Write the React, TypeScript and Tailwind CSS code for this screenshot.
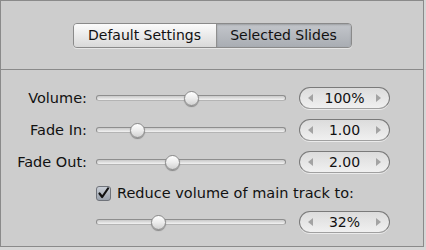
import React from "react";

const font = { fontFamily: '"DejaVu Sans", "Liberation Sans", sans-serif' };

interface SliderRowProps {
  label?: string;
  value: string;
  pos: number;
  className?: string;
}

function Slider({ pos }: { pos: number }) {
  return (
    <div className="relative w-[190px] h-[22px] flex items-center">
      <div className="w-full h-[6px] rounded-full border border-[#8e8e8e] border-b-[#b4b4b4] bg-gradient-to-b from-[#c9c9c9] to-[#f2f2f2]" />
      <div
        className="absolute top-[4px] w-[15px] h-[15px] -ml-[7px] rounded-full border border-[#8a8a8a] bg-gradient-to-b from-[#ffffff] via-[#ececec] to-[#d2d2d2] shadow-[0_1px_1px_rgba(0,0,0,0.35)]"
        style={{ left: `${pos * 100}%` }}
      />
    </div>
  );
}

function Stepper({ value }: { value: string }) {
  return (
    <div className="w-[91px] h-[22px] rounded-full border border-[#7a7a7a] border-b-[#a0a0a0] bg-gradient-to-b from-[#dcdcdc] to-[#f0f0f0] flex items-center justify-between px-[8px] shadow-[0_1px_0_rgba(255,255,255,0.6)]">
      <span className="w-0 h-0 border-y-[4px] border-y-transparent border-r-[5px] border-r-[#a3a3a3]" />
      <span className="text-[14px] text-[#111] leading-none">{value}</span>
      <span className="w-0 h-0 border-y-[4px] border-y-transparent border-l-[5px] border-l-[#a3a3a3]" />
    </div>
  );
}

function SliderRow({ label, value, pos, className = "" }: SliderRowProps) {
  return (
    <div className={`flex items-center h-[22px] ${className}`}>
      <div className="w-[86px] text-right text-[14.5px] text-[#111] leading-none">{label}</div>
      <div className="ml-[9px]">
        <Slider pos={pos} />
      </div>
      <div className="ml-[13px]">
        <Stepper value={value} />
      </div>
    </div>
  );
}

export default function App() {
  return (
    <div className="w-[426px] h-[250px] bg-[#d6d6d6]" style={font}>
      <div className="w-[424px] h-[247px] border border-[#8a8a8a] bg-[#cdcdcd] flex flex-col">
        <div className="h-[68px] flex items-center justify-center">
          <div className="flex h-[25px] rounded-[4px] border border-[#8a8a8a] overflow-hidden shadow-[0_1px_0_rgba(255,255,255,0.5)]">
            <div className="w-[143px] flex items-center justify-center bg-gradient-to-b from-[#fbfbfb] to-[#d9d9d9] text-[14px] text-[#111] border-r border-[#8f8f8f]">
              Default Settings
            </div>
            <div className="w-[134px] flex items-center justify-center bg-gradient-to-b from-[#c3c6cb] to-[#a9adb3] text-[14px] text-[#111] shadow-[inset_0_1px_2px_rgba(0,0,0,0.2)]">
              Selected Slides
            </div>
          </div>
        </div>
        <div className="border-t border-[#8a8a8a] flex-1 pt-[17px] flex flex-col">
          <SliderRow label="Volume:" value="100%" pos={0.5} />
          <SliderRow label="Fade In:" value="1.00" pos={0.216} className="mt-[10px]" />
          <SliderRow label="Fade Out:" value="2.00" pos={0.4} className="mt-[10px]" />
          <div className="flex items-center h-[22px] pl-[95px] mt-[9px]">
            <div className="w-[15px] h-[15px] rounded-[3px] border border-[#6f737a] bg-gradient-to-b from-[#c9ced6] to-[#9aa2ad] flex items-center justify-center">
              <svg width="13" height="13" viewBox="0 0 13 13">
                <path d="M2.5 6.5 L5.2 10 L11 1.5" fill="none" stroke="#111" strokeWidth="2.2" strokeLinecap="round" strokeLinejoin="round" />
              </svg>
            </div>
            <span className="ml-[6px] text-[14.5px] text-[#111] leading-none">Reduce volume of main track to:</span>
          </div>
          <SliderRow value="32%" pos={0.326} className="mt-[7px]" />
        </div>
      </div>
    </div>
  );
}
